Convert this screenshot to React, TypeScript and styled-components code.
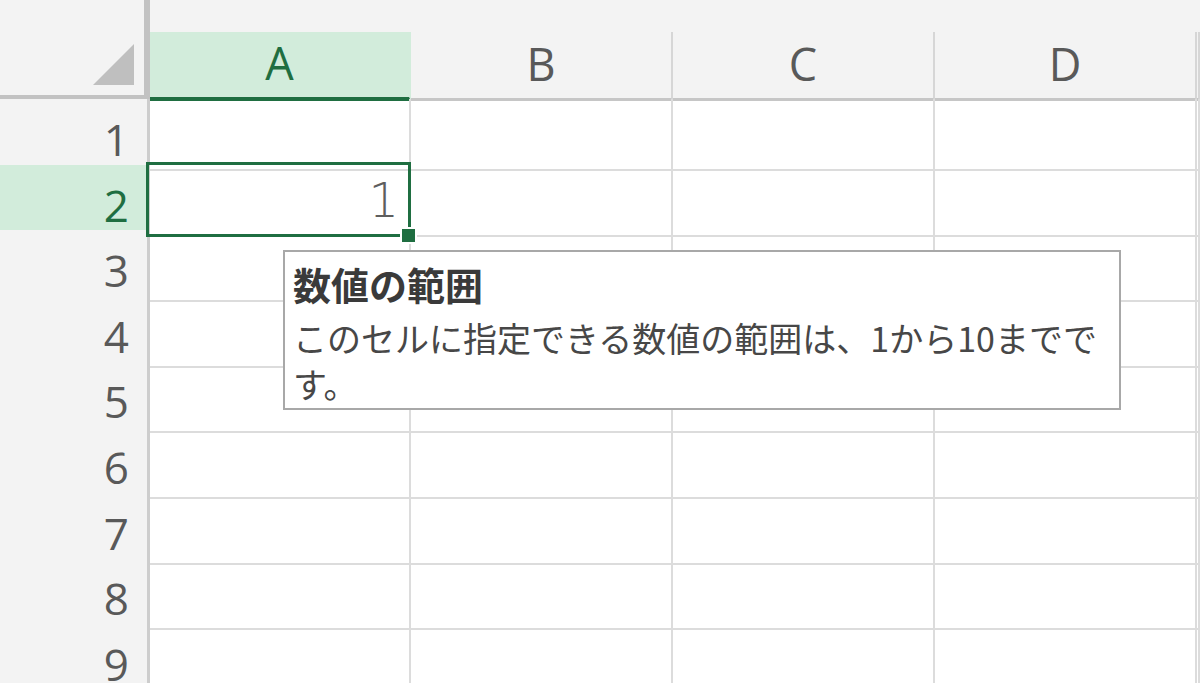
import React from 'react';
import styled, { createGlobalStyle } from 'styled-components';

const COLS = ['A', 'B', 'C', 'D', ''];
const ROWS = [1, 2, 3, 4, 5, 6, 7, 8, 9];
const GRID = '150px 261px 262px 262px 262px 1fr';

const green = '#1f6e41';
const headerBg = '#f3f3f3';
const selectBg = '#d2ecdb';
const gridLine = '#dcdcdc';

const App = () => {
  return (
    <>
      <GlobalStyle />
      <Sheet>
        <HeaderRow>
          <Corner>
            <svg width="44" height="44" viewBox="0 0 44 44">
              <polygon points="42,1 42,42 1,42" fill="#bfbfbf" />
            </svg>
          </Corner>
          {COLS.map((c, i) => (
            <ColHeader key={i} $selected={c === 'A'}>
              {c}
            </ColHeader>
          ))}
        </HeaderRow>
        {ROWS.map((r) => (
          <Row key={r}>
            <RowHeader $selected={r === 2}>{r}</RowHeader>
            {COLS.map((c, i) => (
              <Cell key={i}>
                {r === 2 && c === 'A' && (
                  <>
                    <Value>1</Value>
                    <Selection />
                    <FillHandle />
                  </>
                )}
              </Cell>
            ))}
          </Row>
        ))}
        <Tooltip>
          <TipTitle>数値の範囲</TipTitle>
          <TipBody>このセルに指定できる数値の範囲は、1から10までです。</TipBody>
        </Tooltip>
      </Sheet>
    </>
  );
};

const GlobalStyle = createGlobalStyle`
  html, body {
    margin: 0;
    padding: 0;
    background: #ffffff;
    overflow: hidden;
  }
  body {
    font-family: "Open Sans", "Noto Sans", sans-serif;
  }
`;

const Sheet = styled.div`
  position: relative;
  width: 1200px;
  height: 683px;
  overflow: hidden;
  background: #ffffff;
`;

const HeaderRow = styled.div`
  display: grid;
  grid-template-columns: ${GRID};
  height: 99px;
  background: ${headerBg};
`;

const Corner = styled.div`
  display: flex;
  align-items: flex-end;
  justify-content: flex-end;
  padding: 0 8px 8px 0;
  box-sizing: border-box;
  border-right: 6px solid #c2c2c2;
  border-bottom: 6px solid #c2c2c2;
`;

const ColHeader = styled.div<{ $selected?: boolean }>`
  margin-top: 32px;
  display: flex;
  align-items: center;
  justify-content: center;
  padding-bottom: 4px;
  box-sizing: border-box;
  font-size: 45px;
  color: ${(p) => (p.$selected ? green : '#595959')};
  background: ${(p) => (p.$selected ? selectBg : headerBg)};
  border-right: 2px solid ${(p) => (p.$selected ? selectBg : '#d6d6d6')};
  border-bottom: ${(p) => (p.$selected ? `4px solid ${green}` : '3px solid #c6c6c6')};
`;

const Row = styled.div`
  display: grid;
  grid-template-columns: ${GRID};
  height: 65.6px;
`;

const RowHeader = styled.div<{ $selected?: boolean }>`
  display: flex;
  align-items: center;
  justify-content: flex-end;
  padding: 10px 18px 0 0;
  box-sizing: border-box;
  font-size: 44px;
  color: ${(p) => (p.$selected ? green : '#595959')};
  background: ${(p) => (p.$selected ? selectBg : headerBg)};
  border-right: 3px solid #cdcdcd;
  border-bottom: 2px solid #dadada;
`;

const Cell = styled.div`
  position: relative;
  display: flex;
  align-items: center;
  justify-content: flex-end;
  box-sizing: border-box;
  border-right: 2px solid ${gridLine};
  border-bottom: 2px solid ${gridLine};
`;

const Value = styled.span`
  padding-right: 10px;
  font-family: "DejaVu Sans", sans-serif;
  font-weight: 200;
  font-size: 48px;
  color: #5e5e5e;
`;

const Selection = styled.div`
  position: absolute;
  z-index: 3;
  left: -4px;
  top: -3px;
  right: -2px;
  bottom: -2px;
  border: 3.5px solid ${green};
`;

const FillHandle = styled.div`
  position: absolute;
  z-index: 4;
  right: -8px;
  bottom: -9px;
  width: 17px;
  height: 17px;
  box-sizing: border-box;
  background: ${green};
  border: 2px solid #ffffff;
`;

const Tooltip = styled.div`
  position: absolute;
  z-index: 5;
  left: 283px;
  top: 250px;
  width: 838px;
  box-sizing: border-box;
  padding: 9px 8px 1px 8px;
  background: #ffffff;
  border: 2px solid #a8a8a8;
  font-family: "Noto Sans CJK JP", sans-serif;
`;

const TipTitle = styled.div`
  font-size: 38px;
  line-height: 46px;
  font-weight: 700;
  color: #3a3a3a;
  margin-bottom: 8px;
`;

const TipBody = styled.div`
  font-size: 34px;
  line-height: 46px;
  color: #474747;
`;

export default App;
